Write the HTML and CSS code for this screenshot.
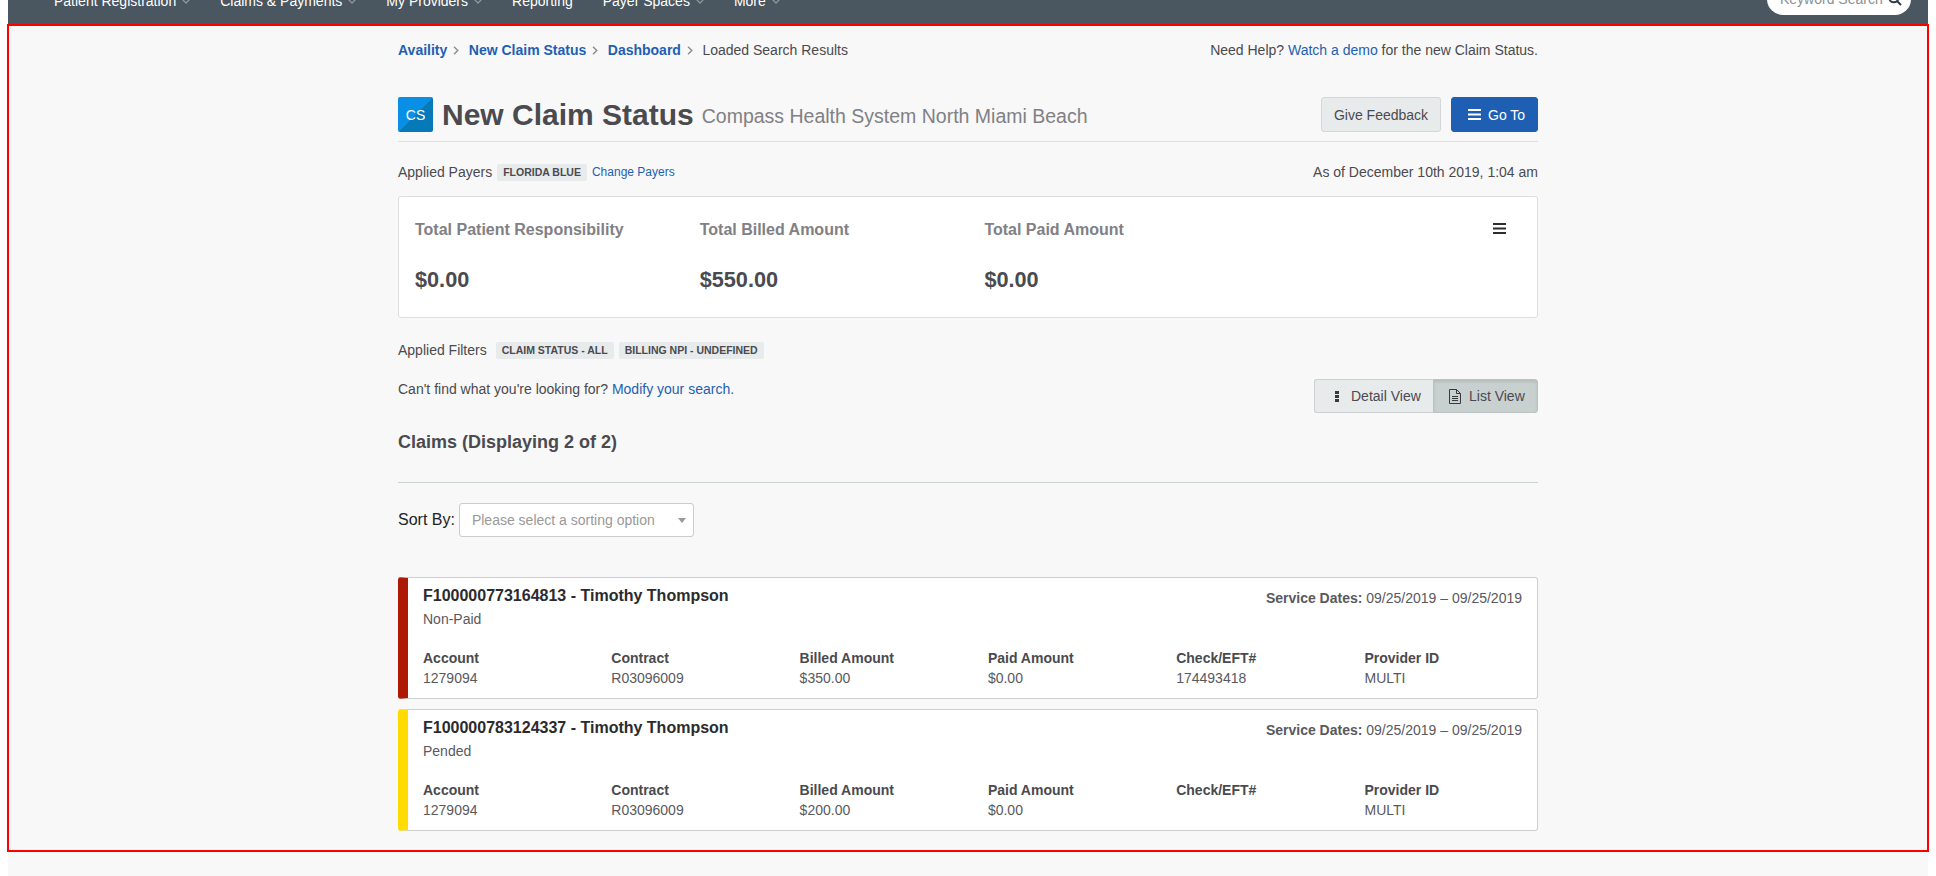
FILE: index.html
```html
<!DOCTYPE html>
<html lang="en">
<head>
  <meta charset="UTF-8">
  <title>New Claim Status</title>
  <link rel="stylesheet" href="styles.css">
</head>
<body>

  <div class="page">
    <nav class="topnav">
      <div class="topnav-inner">
        <a class="nav-item">Patient Registration <svg class="nav-caret" viewBox="0 0 8 5"><path d="M.5.5 4 4 7.500.5"/></svg></a>
        <a class="nav-item">Claims &amp; Payments <svg class="nav-caret" viewBox="0 0 8 5"><path d="M.5.5 4 4 7.500.5"/></svg></a>
        <a class="nav-item">My Providers <svg class="nav-caret" viewBox="0 0 8 5"><path d="M.5.5 4 4 7.500.5"/></svg></a>
        <a class="nav-item">Reporting</a>
        <a class="nav-item">Payer Spaces <svg class="nav-caret" viewBox="0 0 8 5"><path d="M.5.5 4 4 7.500.5"/></svg></a>
        <a class="nav-item">More <svg class="nav-caret" viewBox="0 0 8 5"><path d="M.5.5 4 4 7.500.5"/></svg></a>
        <div class="nav-search">
          <span>Keyword Search</span>
          <svg class="search-icon" viewBox="0 0 14 14"><circle cx="5.800" cy="5.800" r="4.500"/><path d="M9 9l4 4"/></svg>
        </div>
      </div>
    </nav>

    <main class="content">
      <div class="crumb-row">
        <div class="crumbs">
          <a class="crumb-link">Availity</a>
          <svg class="crumb-sep" viewBox="0 0 6 9"><path d="M1 .8 4.800 4.500 1 8.200"/></svg>
          <a class="crumb-link">New Claim Status</a>
          <svg class="crumb-sep" viewBox="0 0 6 9"><path d="M1 .8 4.800 4.500 1 8.200"/></svg>
          <a class="crumb-link">Dashboard</a>
          <svg class="crumb-sep" viewBox="0 0 6 9"><path d="M1 .8 4.800 4.500 1 8.200"/></svg>
          <span>Loaded Search Results</span>
        </div>
        <div>Need Help? <a class="link">Watch a demo</a> for the new Claim Status.</div>
      </div>

      <header class="page-head">
        <div class="app-icon">CS</div>
        <h1 class="page-title">New Claim Status</h1>
        <span class="page-sub">Compass Health System North Miami Beach</span>
        <div class="head-actions">
          <button class="btn btn-light btn-feedback">Give Feedback</button>
          <button class="btn btn-blue">
            <svg class="bars" viewBox="0 0 13 11"><path d="M0 0h13v2H0zM0 4.500h13v2H0zM0 9h13v2H0z"/></svg>
            Go To
          </button>
        </div>
      </header>

      <div class="payers-row">
        <div class="tag-line">
          <span>Applied Payers</span>
          <span class="tag">FLORIDA BLUE</span>
          <a class="link small-link">Change Payers</a>
        </div>
        <div>As of December 10th 2019, 1:04 am</div>
      </div>

      <section class="summary">
        <div class="summary-col">
          <div class="summary-label">Total Patient Responsibility</div>
          <div class="summary-value">$0.00</div>
        </div>
        <div class="summary-col">
          <div class="summary-label">Total Billed Amount</div>
          <div class="summary-value">$550.00</div>
        </div>
        <div class="summary-col">
          <div class="summary-label">Total Paid Amount</div>
          <div class="summary-value">$0.00</div>
        </div>
        <svg class="summary-menu" viewBox="0 0 13 11"><path d="M0 0h13v2H0zM0 4.500h13v2H0zM0 9h13v2H0z"/></svg>
      </section>

      <div class="tag-line filters-row">
        <span>Applied Filters</span>
        <span class="tag tag-first">CLAIM STATUS - ALL</span>
        <span class="tag">BILLING NPI - UNDEFINED</span>
      </div>

      <div class="search-row">
        <div>Can't find what you're looking for? <a class="link">Modify your search.</a></div>
        <div class="view-toggle">
          <button class="toggle-btn toggle-detail">
            <svg class="kebab" viewBox="0 0 4 11"><path d="M0 0h4v3H0zM0 4h4v3H0zM0 8h4v3H0z"/></svg>
            Detail View
          </button>
          <button class="toggle-btn toggle-list">
            <svg class="file-icon" viewBox="0 0 12 15"><path d="M.5.500h7l4 4v10H.5zM7.500.500v4h4M3 7.500h6M3 9.500h6M3 11.500h6"/></svg>
            List View
          </button>
        </div>
      </div>

      <h2 class="claims-title">Claims (Displaying 2 of 2)</h2>
      <hr class="claims-rule">

      <div class="sort-row">
        <label class="sort-label">Sort By:</label>
        <div class="sort-select">
          <span>Please select a sorting option</span>
          <i class="sort-caret"></i>
        </div>
      </div>

      <article class="claim claim-denied">
        <div class="claim-head">
          <div class="claim-name">F100000773164813 - Timothy Thompson</div>
          <div class="claim-dates"><b>Service Dates:</b> 09/25/2019 – 09/25/2019</div>
        </div>
        <div class="claim-status">Non-Paid</div>
        <div class="claim-grid">
          <div><b>Account</b><span>1279094</span></div>
          <div><b>Contract</b><span>R03096009</span></div>
          <div><b>Billed Amount</b><span>$350.00</span></div>
          <div><b>Paid Amount</b><span>$0.00</span></div>
          <div><b>Check/EFT#</b><span>174493418</span></div>
          <div><b>Provider ID</b><span>MULTI</span></div>
        </div>
      </article>

      <article class="claim claim-pended">
        <div class="claim-head">
          <div class="claim-name">F100000783124337 - Timothy Thompson</div>
          <div class="claim-dates"><b>Service Dates:</b> 09/25/2019 – 09/25/2019</div>
        </div>
        <div class="claim-status">Pended</div>
        <div class="claim-grid">
          <div><b>Account</b><span>1279094</span></div>
          <div><b>Contract</b><span>R03096009</span></div>
          <div><b>Billed Amount</b><span>$200.00</span></div>
          <div><b>Paid Amount</b><span>$0.00</span></div>
          <div><b>Check/EFT#</b><span></span></div>
          <div><b>Provider ID</b><span>MULTI</span></div>
        </div>
      </article>
    </main>
  </div>

  <div class="red-frame"></div>

</body>
</html>
```

FILE: styles.css
```css
:root {
  --text: #4a4a4f;
  --soft: #59595e;
  --muted: #808085;
  --link: #1f5fb3;
  --rule: #dcdedf;
  --line: #ccd2d2;
  --chip: #e8ebec;
  --bg: #f8f8f8;
}

* {
  box-sizing: border-box;
}

html, body {
  height: 100%;
}

body {
  margin: 0;
  position: relative;
  overflow: hidden;
  background: #fff;
  font-family: "Liberation Sans", Arial, sans-serif;
  font-size: 14px;
  line-height: 20px;
  color: var(--text);
}

.page {
  margin: 0 8px;
  height: 100%;
  display: flex;
  flex-direction: column;
}

/* top bar, scrolled partly out of view */
.topnav {
  height: 25px;
  flex: none;
  background: #4a5660;
  overflow: hidden;
}

.topnav-inner {
  display: flex;
  align-items: center;
  gap: 30px;
  height: 34px;
  margin-top: -16px;
  padding: 0 17px 0 46px;
  color: #fff;
}

.nav-item {
  display: flex;
  align-items: center;
  white-space: nowrap;
}

.nav-caret {
  width: 8px;
  height: 5px;
  margin-left: 6px;
  fill: none;
  stroke: #8d969d;
  stroke-width: 1.300;
}

.nav-search {
  margin-left: auto;
  align-self: flex-start;
  display: flex;
  align-items: center;
  width: 144px;
  height: 32px;
  margin-top: -1px;
  padding: 0 9px 0 13px;
  background: #fff;
  border-radius: 16px;
  color: #8b8f94;
}

.search-icon {
  width: 14px;
  height: 14px;
  margin-left: auto;
  fill: none;
  stroke: #2f3a42;
  stroke-width: 2;
}

.content {
  flex: 1;
  padding: 15px 390px 0;
  background: var(--bg);
}

.link {
  color: var(--link);
}

.crumb-row,
.payers-row,
.search-row {
  display: flex;
  justify-content: space-between;
}

.crumbs {
  display: flex;
  align-items: center;
}

.crumb-link {
  color: var(--link);
  font-weight: bold;
}

.crumb-sep {
  width: 6px;
  height: 9px;
  margin: 0 9.500px 0 6px;
  fill: none;
  stroke: #8a8d90;
  stroke-width: 1.400;
}

.page-head {
  display: flex;
  align-items: center;
  height: 45px;
  margin-top: 37px;
  padding-bottom: 9px;
  border-bottom: 1px solid var(--rule);
}

.app-icon {
  display: flex;
  align-items: center;
  justify-content: center;
  width: 35px;
  height: 35px;
  border-radius: 2px;
  background: linear-gradient(to bottom right, #0a8fe6 50%, #0679b8 50%);
  color: #fff;
  font-size: 14px;
}

.page-title {
  margin: 0 0 0 9px;
  font-size: 30px;
  line-height: 35px;
  font-weight: bold;
}

.page-sub {
  margin-left: 8px;
  padding-top: 2px;
  font-size: 19.500px;
  color: var(--muted);
}

.head-actions {
  display: flex;
  gap: 10px;
  margin-left: auto;
}

.btn {
  display: flex;
  align-items: center;
  justify-content: center;
  height: 35px;
  padding: 0;
  border-radius: 3px;
  font: inherit;
}

.btn-light {
  background: var(--chip);
  border: 1px solid #d3d7d8;
  color: var(--text);
}

.btn-feedback {
  width: 120px;
}

.btn-blue {
  justify-content: flex-start;
  gap: 7px;
  width: 87px;
  padding-left: 16px;
  background: var(--link);
  border: 1px solid var(--link);
  color: #fff;
}

.bars {
  width: 13px;
  height: 11px;
  fill: #fff;
}

.payers-row {
  margin-top: 20px;
}

.tag-line {
  display: flex;
  align-items: center;
  gap: 5px;
}

.tag {
  height: 17px;
  padding: 0 6px;
  border-radius: 2px;
  background: var(--chip);
  font-size: 10.500px;
  line-height: 17px;
  font-weight: bold;
}

.small-link {
  font-size: 12px;
}

.summary {
  display: grid;
  grid-template-columns: 284.700px 284.700px 284.700px 1fr;
  height: 122px;
  margin-top: 14px;
  padding: 22px 31px 0 16px;
  background: #fff;
  border: 1px solid var(--rule);
  border-radius: 3px;
}

.summary-label {
  font-size: 16px;
  line-height: 22px;
  font-weight: bold;
  color: var(--muted);
}

.summary-value {
  margin-top: 24px;
  font-size: 21.700px;
  line-height: 30px;
  font-weight: bold;
}

.summary-menu {
  justify-self: end;
  width: 13px;
  height: 11px;
  margin-top: 4px;
  fill: #2d2d30;
}

.filters-row {
  height: 18px;
  margin-top: 23px;
}

.tag-first {
  margin-left: 4px;
}

.search-row {
  margin-top: 20px;
  height: 34px;
}

.view-toggle {
  display: flex;
}

.toggle-btn {
  display: flex;
  align-items: center;
  height: 34px;
  padding: 0;
  font: inherit;
  color: var(--text);
  border: 1px solid #ccd0d1;
}

.toggle-detail {
  gap: 12px;
  width: 119px;
  padding-left: 20px;
  background: var(--chip);
  border-right: 0;
  border-radius: 3px 0 0 3px;
}

.toggle-list {
  gap: 8px;
  width: 105px;
  padding-left: 15px;
  background: #c9d0d0;
  border-color: #bcc3c3;
  border-radius: 0 3px 3px 0;
  box-shadow: inset 0 2px 3px rgba(0,0,0,0.1);
}

.kebab {
  width: 4px;
  height: 11px;
  fill: #3a3a3e;
}

.file-icon {
  width: 12px;
  height: 15px;
  fill: none;
  stroke: #3a3a3e;
  stroke-width: 1;
}

.claims-title {
  margin: 17px 0 0;
  font-size: 18px;
  line-height: 24px;
  font-weight: bold;
}

.claims-rule {
  height: 1px;
  margin: 28px 0 0;
  border: 0;
  background: var(--line);
}

.sort-row {
  display: flex;
  align-items: center;
  gap: 4px;
  margin-top: 20px;
}

.sort-label {
  font-size: 16px;
  color: #222;
}

.sort-select {
  display: flex;
  align-items: center;
  justify-content: space-between;
  width: 235px;
  height: 34px;
  padding: 0 7px 0 12px;
  background: #fff;
  border: 1px solid #ccc;
  border-radius: 3px;
  color: #999;
}

.sort-caret {
  width: 0;
  height: 0;
  border-left: 4px solid transparent;
  border-right: 4px solid transparent;
  border-top: 5px solid #999;
}

.claim {
  height: 122px;
  margin-top: 10px;
  padding: 8px 15px 0;
  background: #fff;
  border: 1px solid #cfcfcf;
  border-left-width: 10px;
  border-radius: 3px;
}

.claim-denied {
  margin-top: 40px;
  border-left-color: #ae1905;
}

.claim-pended {
  border-left-color: #ffdb00;
}

.claim-head {
  display: flex;
  justify-content: space-between;
}

.claim-name {
  font-size: 16px;
  font-weight: bold;
  color: #2b2b2e;
}

.claim-dates {
  margin-top: 2px;
  color: var(--soft);
}

.claim-status {
  margin-top: 1px;
  color: var(--soft);
}

.claim-grid {
  display: grid;
  grid-template-columns: repeat(5, 188.300px) 1fr;
  margin-top: 19px;
}

.claim-grid b,
.claim-grid span {
  display: block;
  height: 20px;
}

.claim-grid span {
  color: var(--soft);
}

/* annotation frame over the page */
.red-frame {
  position: absolute;
  left: 7px;
  top: 24px;
  width: 1922px;
  height: 828px;
  border: 2px solid #f00;
  pointer-events: none;
}
```
